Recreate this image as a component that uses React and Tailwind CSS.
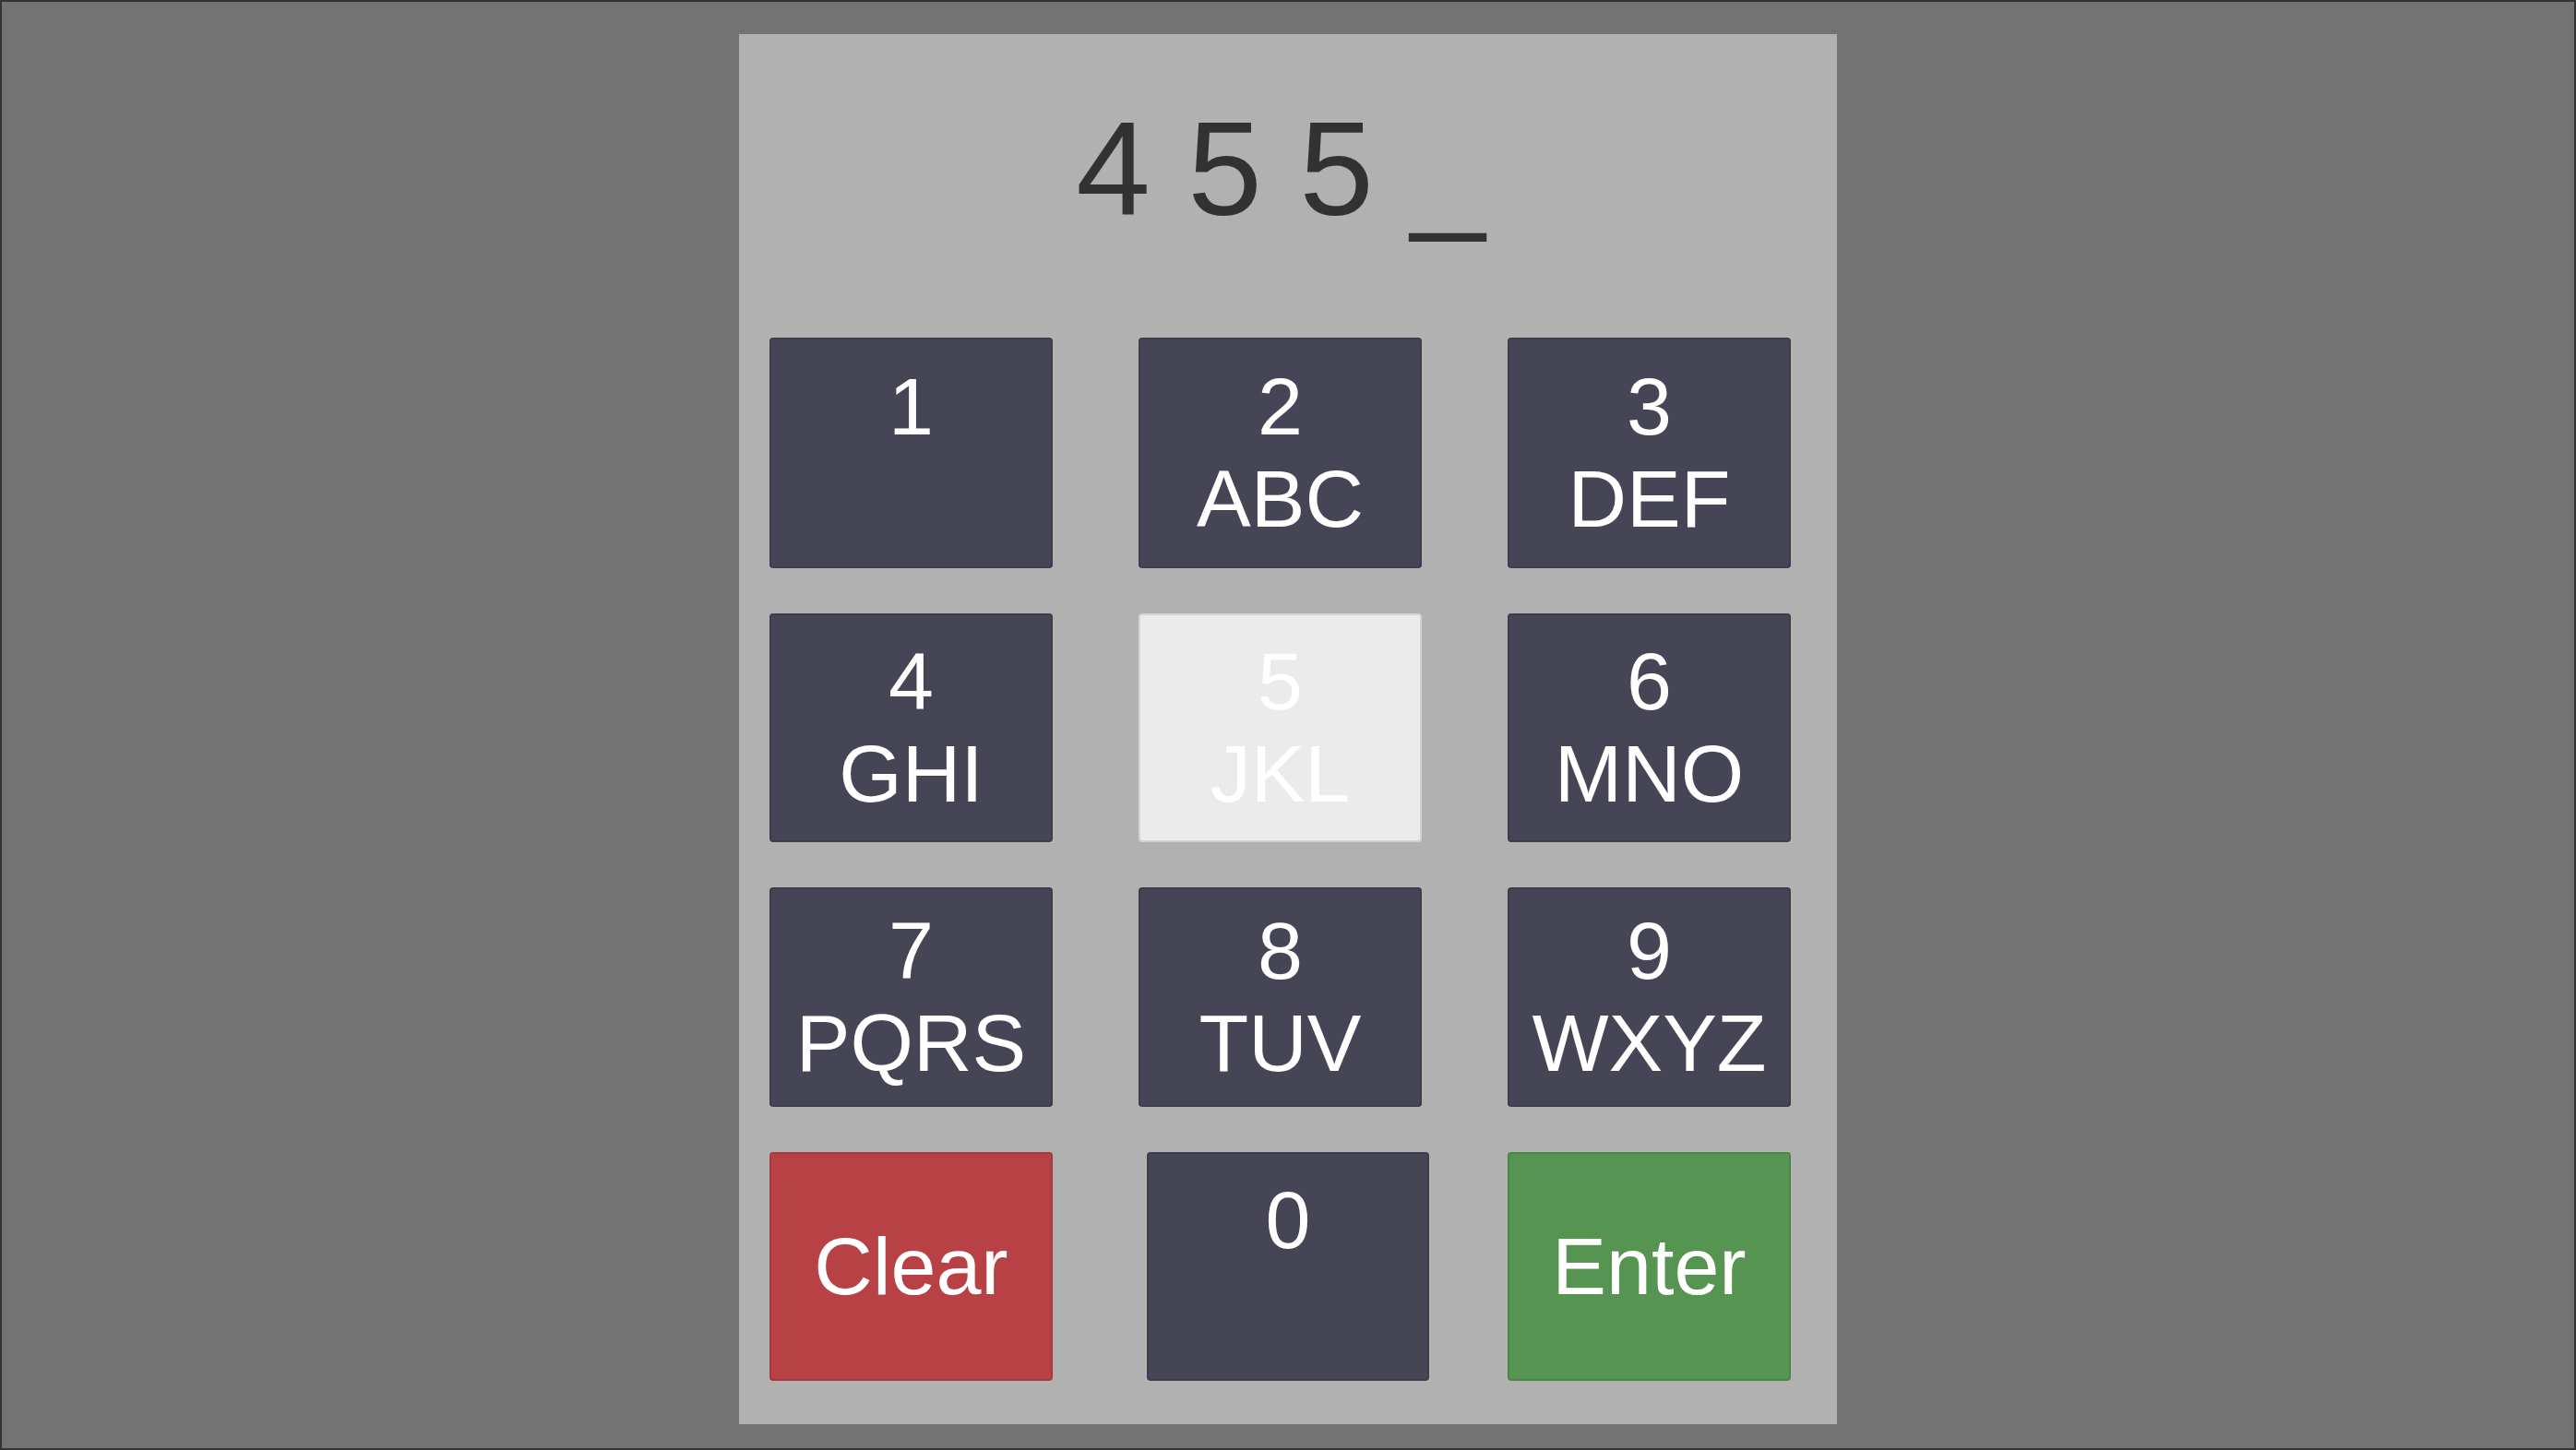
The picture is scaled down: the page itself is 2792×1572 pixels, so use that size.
import React from 'react';

const keys = [
  { digit: '1', letters: '\u00A0' },
  { digit: '2', letters: 'ABC' },
  { digit: '3', letters: 'DEF' },
  { digit: '4', letters: 'GHI' },
  { digit: '5', letters: 'JKL', active: true },
  { digit: '6', letters: 'MNO' },
  { digit: '7', letters: 'PQRS' },
  { digit: '8', letters: 'TUV' },
  { digit: '9', letters: 'WXYZ' },
];

const KeyButton = ({ digit, letters, active }) => (
  <button
    className={`w-full h-full flex flex-col items-center justify-center rounded-[4px] border-2 border-black/10 text-white text-[88px] leading-[100px] ${
      active ? 'bg-[#ebebeb]' : 'bg-[#454555]'
    }`}
  >
    <span>{digit}</span>
    <span>{letters}</span>
  </button>
);

const App = () => {
  const code = '4 5 5 _';

  return (
    <div
      className="w-[2792px] h-[1572px] bg-[#737373] border-2 border-[#333333] flex justify-center pt-[35px]"
      style={{ fontFamily: '"Liberation Sans", Arial, sans-serif' }}
    >
      <div className="w-[1190px] h-[1507px] bg-[#b1b1b1] flex flex-col pt-[63px]">
        {/* Entered code */}
        <div className="h-[167px] flex justify-center pr-[16px] text-[145px] leading-[167px] text-[#323232] whitespace-pre">
          {code}
        </div>

        {/* Keypad */}
        <div className="mt-[99px] pl-[33px] grid grid-cols-[307px_307px_307px] grid-rows-[250px_248px_238px_248px] gap-x-[93px] gap-y-[49px]">
          {keys.map((k) => (
            <KeyButton key={k.digit} {...k} />
          ))}

          <button className="w-full h-full flex items-center justify-center rounded-[4px] border-2 border-black/10 bg-[#b84145] text-white text-[88px] leading-[100px]">
            Clear
          </button>
          <div className="w-[306px] h-full ml-[9px]">
            <KeyButton digit="0" letters={'\u00A0'} />
          </div>
          <button className="w-full h-full flex items-center justify-center rounded-[4px] border-2 border-black/10 bg-[#569452] text-white text-[88px] leading-[100px]">
            Enter
          </button>
        </div>
      </div>
    </div>
  );
};

export default App;
